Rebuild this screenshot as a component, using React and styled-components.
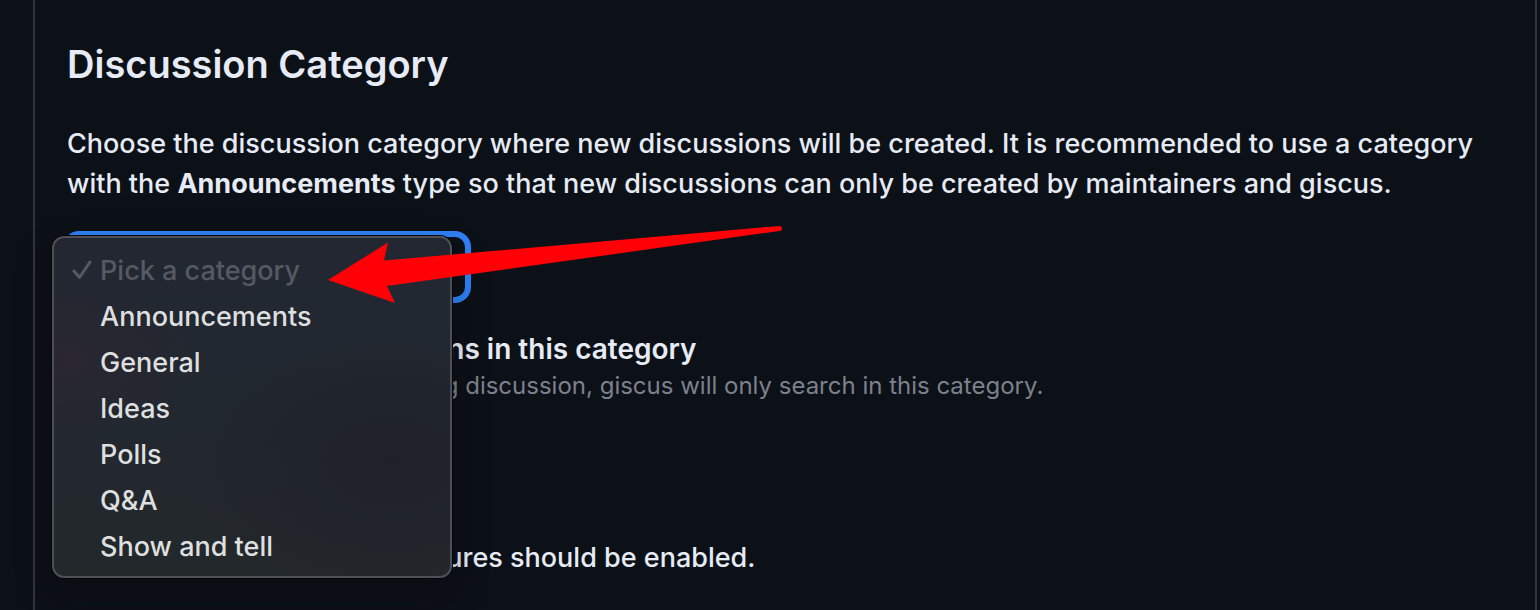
import React from "react";
import styled, { createGlobalStyle } from "styled-components";

const GlobalStyle = createGlobalStyle`
  * { box-sizing: border-box; }
  body {
    margin: 0;
    background: #0c1017;
    color: #e6ebf5;
    font-family: Inter, "Liberation Sans", sans-serif;
    font-size: 27px;
    font-weight: 500;
    line-height: 40px;
  }
`;

const Page = styled.div`
  min-height: 100vh;
  display: flex;
  padding: 0 3px 0 33px;
  overflow: hidden;
`;

const Panel = styled.main`
  flex: 1;
  min-width: 0;
  padding: 40px 32px 32px;
  border: solid #30343c;
  border-width: 0 2px;
`;

const Title = styled.h2`
  margin: 0;
  font-size: 38px;
  line-height: 48px;
  font-weight: 600;
`;

const Paragraph = styled.p`
  margin: 36px 0 0;
`;

const Strong = styled.strong`
  font-weight: 700;
`;

const Field = styled.div`
  position: relative;
  width: 408px;
  margin: 27px 0 0 -4px;
`;

const Select = styled.select`
  display: block;
  width: 100%;
  height: 72px;
  padding: 0 30px;
  appearance: none;
  outline: none;
  border: 6px solid #2f81f7;
  border-radius: 16px;
  background: #0c1017;
  color: inherit;
  font: inherit;
`;

const Menu = styled.div`
  position: absolute;
  top: 5px;
  left: -11px;
  width: 400px;
  padding: 10px 8px 6px;
  border: 2px solid #4d5056;
  border-radius: 12px;
  background:
    radial-gradient(ellipse at 85% 66%, #1e2129 0%, transparent 45%),
    radial-gradient(ellipse at 0% 36%, #2a2630 0%, transparent 26%),
    linear-gradient(#222731, #222831 35%, #23282b);
  box-shadow: 0 0 0 1px #050608, 0 16px 36px rgba(10, 12, 12, 0.3);
`;

const Option = styled.button`
  display: flex;
  align-items: center;
  width: 100%;
  height: 46px;
  padding: 0 0 0 10px;
  border: 0;
  background: none;
  color: #dedfdf;
  font: inherit;
  text-align: left;

  &:disabled { color: #555962; }
`;

const Mark = styled.span`
  display: flex;
  flex: none;
  width: 28px;
`;

const CheckRow = styled.div`
  display: grid;
  grid-template-columns: 37px 1fr;
  align-items: center;
  margin-top: 26px;
`;

const Checkbox = styled.input`
  width: 26px;
  height: 26px;
  margin: 0;
`;

const CheckLabel = styled.label`
  font-size: 28px;
  font-weight: 600;
`;

const Hint = styled.p`
  grid-column: 2;
  margin: 0;
  color: #7d818d;
  font-size: 24px;
  font-weight: 400;
  line-height: 34px;
`;

const SubTitle = styled(Title)`
  margin-top: 51px;
`;

const Arrow = styled.svg`
  position: absolute;
  top: -10px;
  left: 264px;
  width: 458px;
  height: 84px;
  pointer-events: none;
`;

const categories = ["Announcements", "General", "Ideas", "Polls", "Q&A", "Show and tell"];

export default function App() {
  return (
    <Page>
      <GlobalStyle />
      <Panel>
        <Title>Discussion Category</Title>
        <Paragraph>
          Choose the discussion category where new discussions will be created. It is recommended
          to use a category with the <Strong>Announcements</Strong> type so that new discussions
          can only be created by maintainers and giscus.
        </Paragraph>

        <Field>
          <Select aria-label="Discussion category" defaultValue="">
            <option value="" disabled>Pick a category</option>
            {categories.map((name) => <option key={name}>{name}</option>)}
          </Select>
          <Menu role="listbox" aria-label="Categories">
            <Option role="option" aria-selected="true" disabled>
              <Mark>
                <svg width="20" height="22" viewBox="0 0 20 22" fill="none" aria-hidden="true">
                  <path d="M2 11 L7.5 17.5 L18 2" stroke="currentColor" strokeWidth="3" strokeLinecap="round" strokeLinejoin="round" />
                </svg>
              </Mark>
              Pick a category
            </Option>
            {categories.map((name) => (
              <Option key={name} role="option" aria-selected="false">
                <Mark />
                {name}
              </Option>
            ))}
          </Menu>
          <Arrow viewBox="0 0 458 84" aria-hidden="true">
            <path
              d="M1 59 L61 21.5 L57 39.5 L452 5 Q455 5 455 7.5 Q455 10 452 10 L60 65 L68 82 Z"
              fill="#ff0006"
            />
          </Arrow>
        </Field>

        <CheckRow>
          <Checkbox type="checkbox" id="strict" />
          <CheckLabel htmlFor="strict">Only search for discussions in this category</CheckLabel>
          <Hint>When searching for a matching discussion, giscus will only search in this category.</Hint>
        </CheckRow>

        <SubTitle>Features</SubTitle>
        <Paragraph>Choose whether specific features should be enabled.</Paragraph>
      </Panel>
    </Page>
  );
}
